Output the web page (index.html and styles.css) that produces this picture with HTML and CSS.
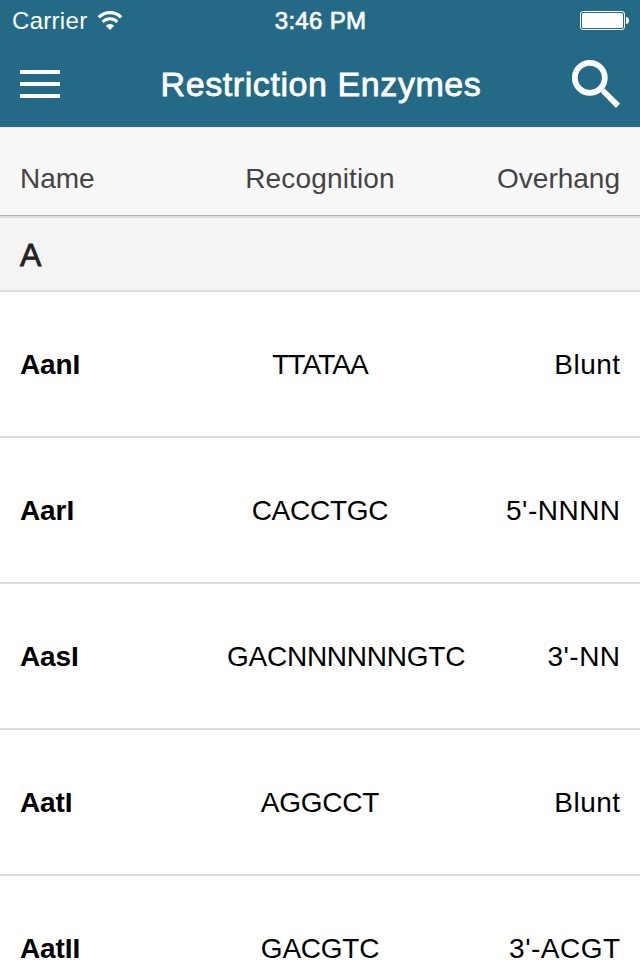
FILE: index.html
```html
<!DOCTYPE html>
<html lang="en">
  <head>
    <meta charset="utf-8">
    <title>Restriction Enzymes</title>
    <meta name="viewport" content="width=device-width, initial-scale=1">
    <link rel="stylesheet" href="styles.css">
  </head>
  <body>
    <header class="header">
      <div class="status-bar">
        <div class="carrier">
          <span class="carrier-name">Carrier</span>
          <svg class="wifi" width="26" height="20" viewBox="0 0 26 20">
            <path d="M1.8 6.3a15.6 15.6 0 0 1 22.4 0" fill="none" stroke="#fff" stroke-width="3.2"/>
            <path d="M5.7 10.9a10.3 10.3 0 0 1 14.6 0" fill="none" stroke="#fff" stroke-width="3"/>
            <path d="M13 19l-4.1-4.3a5.8 5.8 0 0 1 8.2 0z" fill="#fff"/>
          </svg>
        </div>
        <span class="time">3:46 PM</span>
        <svg class="battery" width="50" height="20" viewBox="0 0 50 20">
          <rect x="0.5" y="0.5" width="44" height="18" rx="2.5" fill="none" stroke="#fff"/>
          <rect x="2" y="2" width="41" height="15" rx="1.5" fill="#fff"/>
          <path d="M46 6c4 0 4 7 0 7z" fill="#fff"/>
        </svg>
      </div>
      <div class="nav-bar">
        <svg class="menu-icon" width="40" height="29" viewBox="0 0 40 29">
          <path d="M0 2h40M0 14h40M0 26h40" stroke="#fff" stroke-width="4"/>
        </svg>
        <h1 class="title">Restriction Enzymes</h1>
        <svg class="search-icon" width="50" height="50" viewBox="0 0 50 50">
          <circle cx="17.8" cy="18.8" r="15" fill="none" stroke="#fff" stroke-width="5.8"/>
          <path d="M29 31.5l2.2-.6.8-2 16 15.6-4 4.4-14.6-14.9z" fill="#fff"/>
        </svg>
      </div>
    </header>
    <div class="row column-names">
      <span>Name</span>
      <span class="recognition">Recognition</span>
      <span class="overhang">Overhang</span>
    </div>
    <h2 class="section">A</h2>
    <div class="enzymes">
      <div class="row">
        <span class="name">AanI</span>
        <span class="recognition tight">TTATAA</span>
        <span class="overhang">Blunt</span>
      </div>
      <div class="row">
        <span class="name">AarI</span>
        <span class="recognition">CACCTGC</span>
        <span class="overhang">5'-NNNN</span>
      </div>
      <div class="row">
        <span class="name">AasI</span>
        <span class="recognition">GACNNNNNNGTC</span>
        <span class="overhang">3'-NN</span>
      </div>
      <div class="row">
        <span class="name">AatI</span>
        <span class="recognition">AGGCCT</span>
        <span class="overhang">Blunt</span>
      </div>
      <div class="row">
        <span class="name">AatII</span>
        <span class="recognition">GACGTC</span>
        <span class="overhang">3'-ACGT</span>
      </div>
    </div>
  </body>
</html>
```
FILE: styles.css
```css
* {
  box-sizing: border-box;
}
body {
  margin: 0;
  background-color: #fff;
  color: #000;
  font-family: "Liberation Sans", Arial, sans-serif;
  font-size: 28px;
}
.header {
  height: 127px;
  background-color: #246a87;
  color: #fff;
}
.status-bar {
  display: grid;
  grid-template-columns: 1fr auto 1fr;
  align-items: center;
  height: 41px;
  padding: 0 11px 0 12px;
  font-size: 24px;
  line-height: 40px;
}
.carrier {
  display: flex;
  align-items: center;
  gap: 10px;
}
.carrier-name {
  letter-spacing: 0.3px;
}
.time {
  -webkit-text-stroke: 0.7px #fff;  /* medium weight */
  letter-spacing: 0.3px;
}
.battery {
  justify-self: end;
  margin-right: -1px;
}
.nav-bar {
  display: grid;
  grid-template-columns: 50px 1fr 50px;
  align-items: center;
  height: 86px;
  padding: 0 18px 0 20px;
}
.title {
  margin: 0;
  font-size: 34px;
  font-weight: normal;
  text-align: center;
  letter-spacing: 0.58px;
  -webkit-text-stroke: 0.8px #fff;
}
.row {
  display: grid;
  grid-template-columns: 1fr 186px 1fr;
  align-items: center;
  height: 146px;
  padding: 2px 20px 0;
  border-bottom: 2px solid #dcdcdc;
  line-height: 22px;
  white-space: nowrap;
}
.column-names {
  height: 89px;
  padding-top: 15px;
  background-color: #f8f8f8;
  border-top: 1px solid #e6e8ea;
  border-bottom: 1px solid #b2b2b2;
  color: #444;
}
.section {
  height: 76px;
  margin: 0;
  padding: 0 20px;
  background-color: #f4f4f4;
  border-top: 2px solid #dcdcdc;
  border-bottom: 2px solid #dcdcdc;
  color: #222;
  font-size: 32px;
  font-weight: normal;
  line-height: 74px;
  -webkit-text-stroke: 0.8px #222;
}
.name {
  font-weight: bold;
  letter-spacing: -0.1px;
}
.recognition {
  text-align: center;
  letter-spacing: -0.25px;
}
.column-names .recognition {
  letter-spacing: 0.15px;
}
.recognition.tight {
  letter-spacing: -0.9px;
}
.overhang {
  text-align: right;
}
.enzymes .overhang {
  margin-right: -0.6px;
  letter-spacing: 0.5px;
}
/* the last row runs to the bottom of the screen */
.enzymes .row:last-child {
  align-items: end;
  height: 84px;
  border-bottom: none;
}
```
